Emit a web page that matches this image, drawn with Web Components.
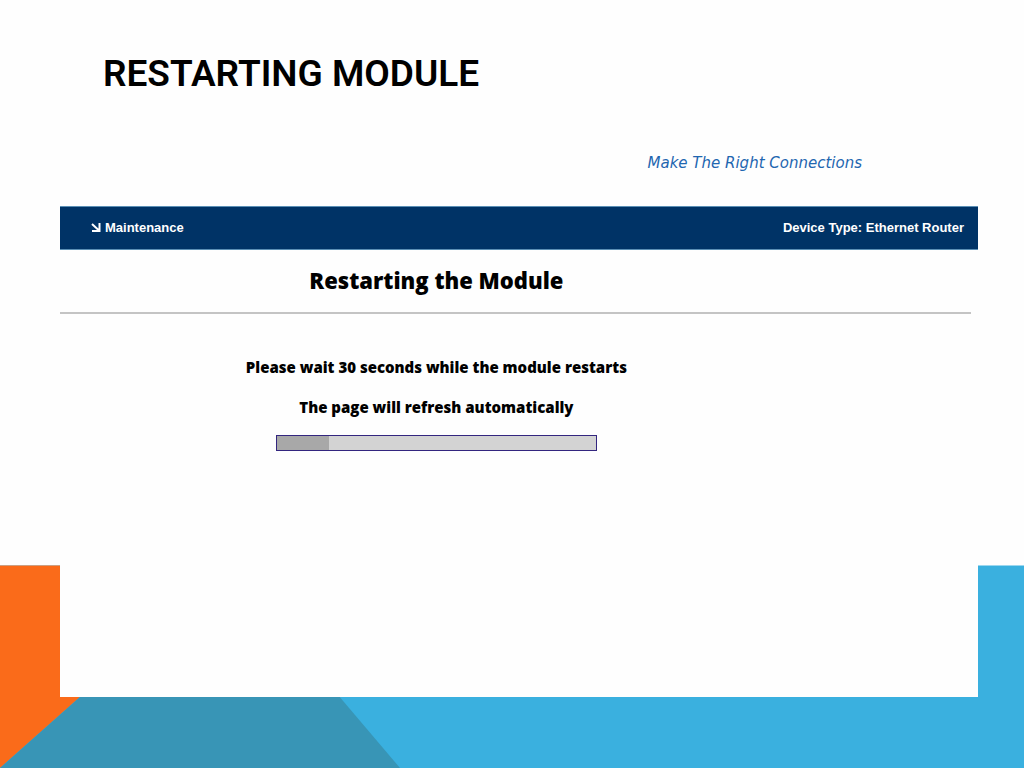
<!DOCTYPE html>
<html lang="en">
<head>
<meta charset="utf-8">
<title>Restarting Module</title>
<style>
  body { margin: 0; background: #fefefe; font-family: "Liberation Sans", Arial, sans-serif; }
</style>
</head>
<body>
<slide-page>
  <span slot="title">Restarting Module</span>
  <router-panel>
    <brand-tagline>Make The Right Connections</brand-tagline>
    <nav-bar>
      <span slot="section">Maintenance</span>
      <span slot="device">Device Type: Ethernet Router</span>
    </nav-bar>
    <restart-status value="52" max="319">
      <span slot="heading">Restarting the Module</span>
      <span slot="message">Please wait 30 seconds while the module restarts</span>
      <span slot="note">The page will refresh automatically</span>
    </restart-status>
  </router-panel>
</slide-page>
<script>
  function define(name, markup, setup) {
    const template = document.createElement('template');
    template.innerHTML = markup;
    customElements.define(name, class extends HTMLElement {
      constructor() {
        super();
        this.attachShadow({ mode: 'open' }).append(template.content.cloneNode(true));
      }
      connectedCallback() { if (setup) setup(this, this.shadowRoot); }
    });
  }

  define('slide-backdrop', `
    <style>
      :host { display: block; height: 203px; }
      svg { display: block; width: 100%; height: 100%; }
    </style>
    <svg viewBox="0 0 1024 203" preserveAspectRatio="none" aria-hidden="true">
      <path fill="#3ab0df" d="M0 .5H1024V203H0z"/>
      <path fill="#fa6b1a" d="M0 .5H228L0 203z"/>
      <path fill="#3895b6" d="M228 .5L400 203H0z"/>
    </svg>`);

  define('slide-page', `
    <style>
      :host { display: grid; grid-template-columns: minmax(0, 1fr); min-height: 100vh; }
      slide-backdrop, .content { grid-area: 1 / 1; }
      slide-backdrop { align-self: end; }
      .content { display: flex; flex-direction: column; padding: 0 46px 71px 60px; z-index: 1; }
      h1 { margin: 0; padding: 49px 0 20px 43px; font: 600 37px/50px Roboto, sans-serif; color: #000; text-transform: uppercase; }
      .body { flex: 1; display: flex; flex-direction: column; }
      ::slotted(router-panel) { flex: 1; }
    </style>
    <slide-backdrop></slide-backdrop>
    <div class="content">
      <h1><slot name="title"></slot></h1>
      <main class="body"><slot></slot></main>
    </div>`);

  define('router-panel', `
    <style>
      :host { display: block; background: #fefefe; }
    </style>
    <slot></slot>`);

  define('brand-tagline', `
    <style>
      :host { display: block; padding: 34px 116px 33px 0; text-align: right; font: italic 15px/20px "DejaVu Sans", sans-serif; color: #1f66b0; }
    </style>
    <slot></slot>`);

  define('nav-bar', `
    <style>
      :host { display: block; background: #003366; color: #fff; border: solid #5b8fb5; border-width: 1px 0; }
      nav { display: flex; justify-content: space-between; align-items: center; height: 42px; padding: 0 14px 0 31px; font: bold 13px/16px "Liberation Sans", Arial, sans-serif; }
      a { display: flex; align-items: center; gap: 4px; color: inherit; text-decoration: none; }
    </style>
    <nav>
      <a href="#maintenance">
        <svg width="10" height="10" viewBox="0 0 10 10" fill="none" stroke="currentColor" stroke-width="2" aria-hidden="true">
          <path d="M1 1L7.500 7M8.500 0V8H1"/>
        </svg>
        <slot name="section"></slot>
      </a>
      <slot name="device"></slot>
    </nav>`);

  define('restart-status', `
    <style>
      :host { display: block; color: #000; font-family: "Open Sans", sans-serif; }
      h2, p { margin: 0; padding-right: 18%; text-align: center; font-weight: 800; }
      h2 { font-size: 22px; line-height: 28px; padding-top: 16px; }
      hr { margin: 18px 7px 43px 0; border: 0; height: 2px; background: #c4c4c4; }
      p { font-size: 15px; line-height: 20px; margin-bottom: 20px; }
      .bar { display: flex; justify-content: center; padding-right: 18%; margin-top: -2px; }
      progress { appearance: none; box-sizing: border-box; width: 321px; height: 16px; border: 1px solid #33267f; background: #d3d3d3; }
      progress::-webkit-progress-bar { background: #d3d3d3; }
      progress::-webkit-progress-value { background: #a8a8a8; }
    </style>
    <h2><slot name="heading"></slot></h2>
    <hr>
    <p><slot name="message"></slot></p>
    <p><slot name="note"></slot></p>
    <div class="bar"><progress aria-label="Restart progress"></progress></div>`,
    (host, root) => {
      const bar = root.querySelector('progress');
      bar.max = Number(host.getAttribute('max'));
      bar.value = Number(host.getAttribute('value'));
    });
</script>
</body>
</html>
